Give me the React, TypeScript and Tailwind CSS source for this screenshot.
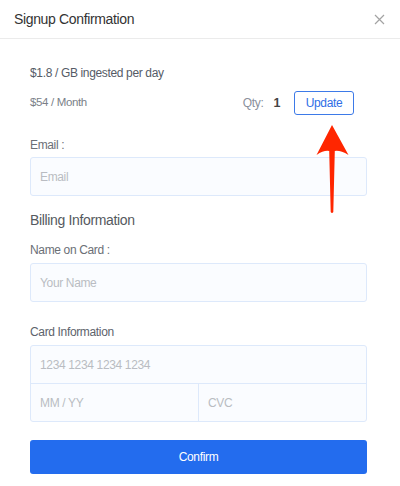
import React from "react";

const font = { fontFamily: '"Liberation Sans", Arial, sans-serif' };

export default function App() {
  return (
    <div className="relative w-[400px] h-[486px] bg-white overflow-hidden tracking-[-0.35px]" style={font}>
      <div className="h-[39px] flex items-center justify-between pl-[14px] pr-[14px] border-b border-[#ebebeb]">
        <span className="text-[14px] text-[#333]">Signup Confirmation</span>
        <svg width="11" height="11" viewBox="0 0 11 11" className="mr-[1px]">
          <path d="M1 1L10 10M10 1L1 10" stroke="#a3a3a3" strokeWidth="1.2" />
        </svg>
      </div>
      <div className="flex flex-col pl-[30px] pr-[33px] pt-[26px]">
        <div className="h-[16px] leading-[16px] text-[12px] text-[#555b66]">$1.8 / GB ingested per day</div>
        <div className="mt-[10px] h-[24px] flex items-center">
          <span className="text-[11.5px] text-[#7a7f88] flex-1">$54 / Month</span>
          <span className="text-[12px] text-[#8a909b]">Qty:</span>
          <span className="ml-[10px] text-[12.5px] font-bold text-[#444]">1</span>
          <button className="ml-[14px] mr-[13px] w-[60px] h-[24px] rounded-[3px] border border-[#3d7ae8] text-[#2f6ee6] text-[12px] bg-white">
            Update
          </button>
        </div>
        <div className="mt-[22px] h-[16px] leading-[16px] text-[12px] text-[#6b6f76]">Email :</div>
        <div className="mt-[4px] h-[39px] rounded-[3px] border border-[#dde9fb] bg-[#fafcff] flex items-center px-[9px] text-[12px] text-[#b9bcc2]">
          Email
        </div>
        <div className="mt-[15px] h-[18px] leading-[18px] text-[14px] text-[#555a60]">Billing Information</div>
        <div className="mt-[13px] h-[16px] leading-[16px] text-[12px] text-[#6b6f76]">Name on Card :</div>
        <div className="mt-[5px] h-[39px] rounded-[3px] border border-[#dde9fb] bg-[#fafcff] flex items-center px-[9px] text-[12px] text-[#b9bcc2]">
          Your Name
        </div>
        <div className="mt-[22px] h-[16px] leading-[16px] text-[12px] text-[#5d636b]">Card Information</div>
        <div className="mt-[5px] rounded-[3px] border border-[#dde9fb] bg-[#fafcff] flex flex-col text-[12px] text-[#b9bcc2]">
          <div className="h-[38px] flex items-center px-[9px] border-b border-[#dde9fb]">1234 1234 1234 1234</div>
          <div className="h-[37px] flex">
            <div className="w-[168px] flex items-center px-[9px] border-r border-[#dde9fb]">MM / YY</div>
            <div className="flex-1 flex items-center px-[9px]">CVC</div>
          </div>
        </div>
        <button className="mt-[18px] h-[34px] rounded-[3px] bg-[#236cee] text-white text-[12px]">Confirm</button>
      </div>
      <svg className="absolute left-[316px] top-[124px]" width="34" height="92" viewBox="316 124 34 92">
        <path
          d="M332 125 L348.5 155 Q340 150 334.8 151 L333.3 212 Q332 214 330.7 212 L329.2 151 Q324 150 316.5 155 Z"
          fill="#ff2600"
        />
      </svg>
    </div>
  );
}
